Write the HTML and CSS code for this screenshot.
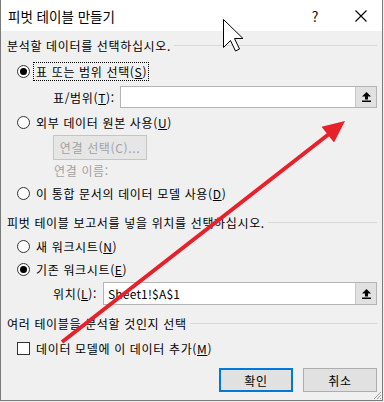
FILE: index.html
```html
<!DOCTYPE html>
<html lang="ko">
<head>
<meta charset="utf-8">
<title>피벗 테이블 만들기</title>
<link rel="stylesheet" href="styles.css">
</head>
<body>
<div class="dialog">
  <div class="titlebar">
    <span class="title">피벗 테이블 만들기</span>
    <span class="help">?</span>
    <span class="close"><svg width="12" height="12" viewBox="0 0 12 12"><path d="M0.5 0.5 L11.5 11.5 M11.5 0.5 L0.5 11.5" stroke="#000" stroke-width="1.1" fill="none"/></svg></span>
  </div>
  <div class="content">
    <div class="group-head gh-1"><span>분석할 데이터를 선택하십시오.</span><i class="rule"></i></div>

    <div class="radio-row rr-1"><span class="radio checked"></span><span class="rlabel focus">표 또는 범위 선택(<u>S</u>)</span></div>

    <div class="field-row fr-range">
      <span class="flabel fl-range">표/범위(<u>T</u>):</span>
      <div class="input in-range"><span class="value"></span><span class="pick"><svg width="9" height="10" viewBox="0 0 9 10"><path d="M4.5 0 L9 4.5 L6 4.5 L6 7.5 L3 7.5 L3 4.5 L0 4.5 Z" fill="#000"/><rect x="0" y="8.5" width="9" height="1.5" fill="#000"/></svg></span></div>
    </div>

    <div class="radio-row rr-2"><span class="radio"></span><span class="rlabel">외부 데이터 원본 사용(<u>U</u>)</span></div>

    <div class="conn-row"><span class="btn-disabled">연결 선택(C)...</span></div>
    <div class="conn-name">연결 이름:</div>

    <div class="radio-row rr-3"><span class="radio"></span><span class="rlabel">이 통합 문서의 데이터 모델 사용(<u>D</u>)</span></div>

    <div class="group-head gh-2"><span>피벗 테이블 보고서를 넣을 위치를 선택하십시오.</span><i class="rule"></i></div>

    <div class="radio-row rr-4"><span class="radio"></span><span class="rlabel">새 워크시트(<u>N</u>)</span></div>
    <div class="radio-row rr-5"><span class="radio checked"></span><span class="rlabel">기존 워크시트(<u>E</u>)</span></div>

    <div class="field-row fr-loc">
      <span class="flabel fl-loc">위치(<u>L</u>):</span>
      <div class="input in-loc"><span class="value">Sheet1!$A$1</span><span class="pick"><svg width="9" height="10" viewBox="0 0 9 10"><path d="M4.5 0 L9 4.5 L6 4.5 L6 7.5 L3 7.5 L3 4.5 L0 4.5 Z" fill="#000"/><rect x="0" y="8.5" width="9" height="1.5" fill="#000"/></svg></span></div>
    </div>

    <div class="group-head gh-3"><span>여러 테이블을 분석할 것인지 선택</span><i class="rule"></i></div>

    <div class="check-row"><span class="checkbox"></span><span class="rlabel">데이터 모델에 이 데이터 추가(<u>M</u>)</span></div>

    <div class="button-row">
      <span class="btn btn-default">확인</span>
      <span class="btn">취소</span>
    </div>
  </div>

  <svg class="grip" width="9" height="9" viewBox="0 0 9 9">
    <path d="M8 1 L1 8 M8 4 L4 8 M8 7 L7 8" stroke="#a0a0a0" stroke-width="1" fill="none"/>
  </svg>

  <svg class="annot" width="384" height="402" viewBox="0 0 384 402">
    <line x1="62" y1="342" x2="329" y2="134" stroke="#e8202a" stroke-width="4" stroke-linecap="butt"/>
    <polygon points="345,121 334,142.5 321.5,126.7" fill="#e8202a"/>
    <polygon points="223.5,19.5 223.5,47.5 230.5,40.5 235.5,51 239.5,49 234.5,38.5 243,38.5" fill="#fff" stroke="#000" stroke-width="1" stroke-linejoin="miter"/>
  </svg>
</div>
</body>
</html>
```

FILE: styles.css
```css
* { box-sizing: border-box; }

html, body {
  margin: 0;
  padding: 0;
  background: #f0f0f0;
}

body {
  font-family: "Noto Sans CJK KR", "Noto Sans", sans-serif;
  font-size: 12px;
  color: #000;
}

.dialog {
  position: relative;
  width: 383px;
  height: 401px;
  background: #f0f0f0;
  border-left: 1px solid #7a7a7a;
  border-right: 1px solid #7a7a7a;
  border-bottom: 1px solid #7a7a7a;
  overflow: hidden;
}

.titlebar {
  height: 31px;
  background: #fff;
  display: flex;
  align-items: center;
  padding-left: 7px;
}

.title {
  font-size: 13.5px;
  flex: 1;
}

.help {
  font-size: 14px;
  width: 14px;
  text-align: center;
  margin-right: 33px;
}

.close {
  display: flex;
  width: 12px;
  margin-right: 15px;
}

.content {
  display: flex;
  flex-direction: column;
  padding: 0 5px 0 6px;
  letter-spacing: 0.65px;
}

u { text-decoration: underline; text-underline-offset: 1px; }

.group-head {
  height: 16px;
  display: flex;
  align-items: center;
  white-space: nowrap;
}
.group-head .rule {
  flex: 1;
  height: 1px;
  background: #d9d9d9;
  margin-left: 3px;
  margin-top: 1px;
}
.gh-1 { margin-top: 6px; }
.gh-2 { margin-top: 11px; }
.gh-3 { margin-top: 10px; }

.radio-row, .check-row {
  height: 20px;
  display: flex;
  align-items: center;
  padding-left: 10px;
  white-space: nowrap;
}
.rr-1 { margin-top: 8px; }
.rr-2 { margin-top: 4px; }
.rr-3 { margin-top: 4px; }
.rr-4 { margin-top: 6px; }
.rr-5 { margin-top: 3px; }

.radio {
  width: 13px;
  height: 13px;
  border: 1px solid #333;
  border-radius: 50%;
  background: #fff;
  display: flex;
  align-items: center;
  justify-content: center;
  margin-right: 3px;
  flex: none;
}
.radio.checked::after {
  content: "";
  width: 7px;
  height: 7px;
  border-radius: 50%;
  background: #000;
}

.rlabel {
  padding: 0 1px 0 2px;
  line-height: 17px;
  border: 1px solid transparent;
}
.rlabel.focus {
  border: 1px dotted #000;
}

.field-row {
  display: flex;
  align-items: center;
  white-space: nowrap;
}
.fr-range { height: 22px; margin-top: 5px; }
.fr-loc { height: 23px; margin-top: 3px; }

.flabel { padding-left: 46px; }
.fl-range { width: 113px; }
.fl-loc { width: 96px; }

.input {
  flex: 1;
  height: 100%;
  background: #fff;
  border: 1px solid #b4b4b4;
  display: flex;
  align-items: stretch;
}
.input .value {
  flex: 1;
  padding-left: 4px;
  display: flex;
  align-items: center;
  letter-spacing: 0.2px;
}
.input .pick {
  width: 21px;
  background: #e1e1e1;
  border-left: 1px solid #c8c8c8;
  display: flex;
  align-items: center;
  justify-content: center;
}

.conn-row {
  margin-top: 3px;
  padding-left: 46px;
  display: flex;
}
.btn-disabled {
  width: 94px;
  height: 25px;
  border: 1px solid #c4c4c4;
  background: #e6e6e6;
  color: #a2a2a2;
  display: flex;
  align-items: center;
  justify-content: center;
}

.conn-name {
  margin-top: 3px;
  height: 16px;
  line-height: 16px;
  padding-left: 47px;
  color: #a2a2a2;
}

.check-row { margin-top: 7px; }
.checkbox {
  width: 13px;
  height: 13px;
  border: 1px solid #333;
  background: #fff;
  margin-right: 3px;
  flex: none;
}

.button-row {
  margin-top: 10px;
  display: flex;
  justify-content: flex-end;
  gap: 10px;
  padding-right: 0;
}
.btn {
  width: 74px;
  height: 24px;
  background: #e1e1e1;
  border: 1px solid #adadad;
  display: flex;
  align-items: center;
  justify-content: center;
}
.btn-default {
  border: 2px solid #0078d7;
}

.grip {
  position: absolute;
  right: 0;
  bottom: 0;
}

.annot {
  position: absolute;
  left: -1px;
  top: 0;
  pointer-events: none;
}
```
